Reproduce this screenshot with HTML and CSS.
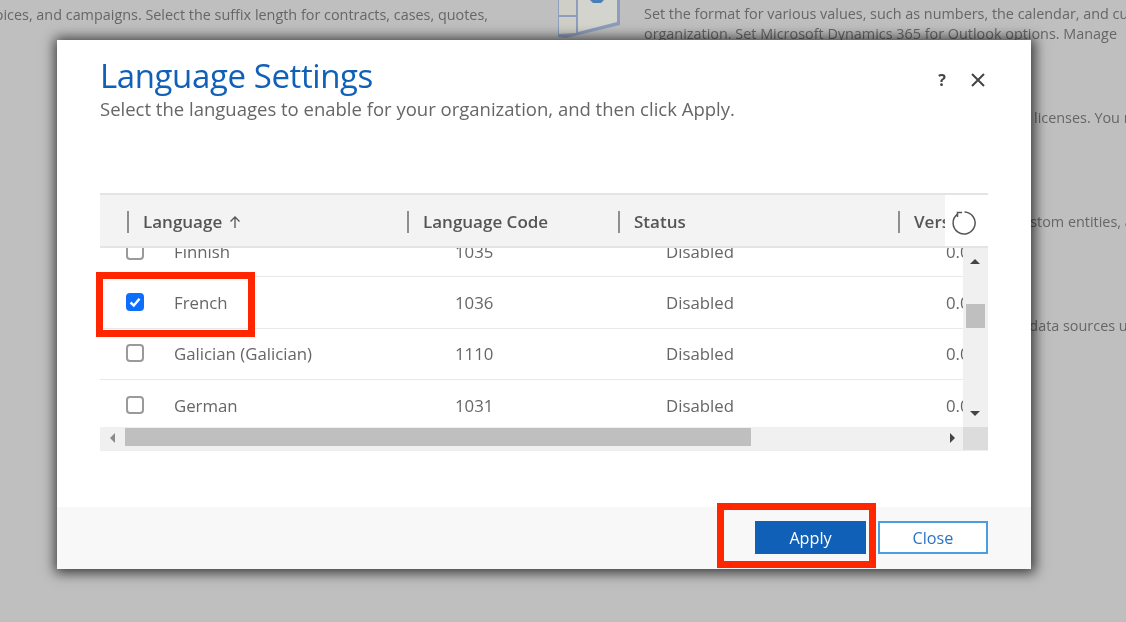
FILE: index.html
```html
<!DOCTYPE html>
<html>
<head>
    <title>Language Settings</title>
    <link rel="stylesheet" href="styles.css">
</head>
<body>

    <!-- settings page behind the dialog -->
    <div class="backdrop">
        <div class="back-left">
            <p>Set the prefix for knowledge articles, invoices, and campaigns. Select the suffix length for contracts, cases, quotes,</p>
        </div>
        <svg class="back-icon" width="64" height="38" viewBox="0 0 64 38">
            <path d="M0 0 H62 V25 L8 38 L0 37 Z" fill="#8d9dbb"/>
            <path d="M1 0 H18 V33 L1 34 Z" fill="#cfcfc8"/>
            <path d="M1 15 H18 V17 H1 Z" fill="#8d9dbb"/>
            <path d="M20 0 H59 V22 L20 32 Z" fill="#d4d4cf"/>
            <path d="M32 0 H46 L43 3 H35 Z" fill="#4a7fb5"/>
        </svg>
        <div class="back-right">
            <p>Set the format for various values, such as numbers, the calendar, and currency, used in your</p>
            <p>organization. Set Microsoft Dynamics 365 for Outlook options. Manage</p>
            <p class="line-licenses">Manage the product keys and the subscription licenses. You need</p>
            <p class="line-entities">Create and change the settings of your system and custom entities, and</p>
            <p class="line-sources">Configure the connections to the external data sources used</p>
        </div>
    </div>

    <!-- dialog -->
    <div class="dialog">
        <div class="dialog-main">
            <div class="dialog-head">
                <div>
                    <h1 class="dialog-title">Language Settings</h1>
                    <p class="dialog-sub">Select the languages to enable for your organization, and then click Apply.</p>
                </div>
                <div class="dialog-tools">
                    <span class="help">?</span>
                    <svg class="close-x" width="16" height="16" viewBox="0 0 16 16"><path d="M2 2 L14 14 M14 2 L2 14" stroke="#444" stroke-width="2" fill="none"/></svg>
                </div>
            </div>

            <div class="grid">
                <div class="grid-head">
                    <div class="col col-lang"><span class="head-cell">Language <svg width="14" height="14" viewBox="0 0 14 14"><path d="M7 13 V2 M2.5 6.5 L7 2 L11.5 6.5" stroke="#555" stroke-width="1.3" fill="none"/></svg></span></div>
                    <div class="col col-code"><span class="head-cell">Language Code</span></div>
                    <div class="col col-status"><span class="head-cell">Status</span></div>
                    <div class="col col-ver"><span class="head-cell">Version</span></div>
                    <div class="refresh">
                        <svg width="26" height="26" viewBox="0 0 26 26"><path d="M13.5 2 A11 11 0 1 1 6.5 4.2" stroke="#555" stroke-width="1.5" fill="none"/><path d="M11 2.5 H6.5 V7" stroke="#555" stroke-width="1.5" fill="none"/></svg>
                    </div>
                </div>
                <div class="grid-mid">
                    <div class="rows">
                        <div class="row row-first">
                            <span class="box"></span><span class="cell-lang">Finnish</span><span class="cell-code">1035</span><span class="cell-status">Disabled</span><span class="cell-ver">0.0.0.0</span>
                        </div>
                        <div class="row">
                            <span class="box box-on"><svg width="18" height="18" viewBox="0 0 18 18"><path d="M4.5 9.5 L7.8 12.5 L13.5 5.8" stroke="#fff" stroke-width="2.4" fill="none"/></svg></span><span class="cell-lang">French</span><span class="cell-code">1036</span><span class="cell-status">Disabled</span><span class="cell-ver">0.0.0.0</span>
                        </div>
                        <div class="row">
                            <span class="box"></span><span class="cell-lang">Galician (Galician)</span><span class="cell-code">1110</span><span class="cell-status">Disabled</span><span class="cell-ver">0.0.0.0</span>
                        </div>
                        <div class="row">
                            <span class="box"></span><span class="cell-lang">German</span><span class="cell-code">1031</span><span class="cell-status">Disabled</span><span class="cell-ver">0.0.0.0</span>
                        </div>
                    </div>
                    <div class="vbar">
                        <span class="arrow arrow-up"></span>
                        <span class="vthumb"></span>
                        <span class="arrow arrow-down"></span>
                    </div>
                </div>
                <div class="grid-foot">
                    <div class="hbar">
                        <span class="arrow arrow-left"></span>
                        <span class="hthumb"></span>
                        <span class="arrow arrow-right"></span>
                    </div>
                    <div class="corner"></div>
                </div>
            </div>
        </div>

        <div class="dialog-foot">
            <button class="btn btn-apply">Apply</button>
            <button class="btn btn-close">Close</button>
        </div>
    </div>

    <!-- red callouts drawn over the screenshot -->
    <div class="callout callout-french"></div>
    <div class="callout callout-apply"></div>

</body>
</html>
```

FILE: styles.css
```css
html, body {
    margin: 0;
    height: 100%;
    overflow: hidden;
    background-color: #bfbfbf;
}
body {
    position: relative;
    width: 1126px;
    height: 622px;
    font-family: "Open Sans", "Noto Sans", sans-serif;
    color: #555;
    filter: blur(0.45px); /* the reference is a soft, scaled-up capture */
}
p, h1 {
    margin: 0;
}

/* page behind */
.backdrop {
    display: flex;
    height: 100%;
    font-size: 14.4px;
    color: #666;
    white-space: nowrap;
}
.back-left {
    width: 488px;
    flex: none;
    display: flex;
    justify-content: flex-end;
    overflow: hidden;
    padding-top: 5px;
}
.back-icon {
    flex: none;
    margin-left: 70px;
}
.back-right {
    margin-left: 22px;
    overflow: hidden;
    flex: 1;
    padding-top: 4px;
}
.back-right p {
    line-height: 20px;
}
.line-licenses {
    margin-top: 64px;
    padding-left: 75px;
}
.line-entities {
    margin-top: 84px;
    padding-left: 27px;
}
.line-sources {
    margin-top: 84px;
    padding-left: 103px;
}

/* dialog */
.dialog {
    position: absolute;
    left: 57px;
    top: 40px;
    width: 974px;
    height: 529px;
    background-color: #fff;
    box-shadow: 1px 1px 12px 3px rgba(0, 0, 0, 0.7);
    display: flex;
    flex-direction: column;
}
.dialog-main {
    flex: 1;
    padding: 16px 43px 0;
}
.dialog-head {
    display: flex;
    justify-content: space-between;
    height: 137px;
}
.dialog-title {
    font-size: 33px;
    font-weight: 400;
    line-height: 40px;
    color: #1160b7;
    letter-spacing: -0.4px;
}
.dialog-sub {
    font-size: 18.5px;
    line-height: 26px;
    color: #666;
}
.dialog-tools {
    display: flex;
    align-items: center;
    gap: 24px;
    height: 48px;
    margin-right: 2px;
}
.help {
    font-size: 16px;
    font-weight: 700;
    color: #444;
}

/* grid */
.grid {
    width: 888px;
    border-bottom: 1px solid #eee;
}
.grid-head {
    position: relative;
    display: flex;
    height: 55px;
    padding-top: 2px;
    background-color: #f3f3f3;
    border-top: 2px solid #e4e4e4;
    border-bottom: 2px solid #e4e4e4;
    box-sizing: border-box;
    font-size: 17px;
    font-weight: 600;
    color: #555;
    overflow: hidden;
}
.col {
    display: flex;
    align-items: center;
    flex: none;
    white-space: nowrap;
}
.col-lang { width: 307px; padding-left: 27px; box-sizing: border-box; }
.col-code { width: 211px; }
.col-status { width: 280px; }
.col-ver { width: 90px; }
.head-cell {
    border-left: 2px solid #8e8e8e;
    padding-left: 14px;
    line-height: 22px;
    display: flex;
    align-items: center;
    gap: 6px;
}
.refresh {
    position: absolute;
    right: 0;
    top: 0;
    width: 43px;
    height: 51px;
    box-sizing: border-box;
    padding: 5px 11px 0 0;
    background-color: #fff;
    display: flex;
    align-items: center;
    justify-content: flex-end;
}
.grid-mid {
    display: flex;
    height: 179px;
}
.rows {
    flex: 1;
    overflow: hidden;
    font-size: 16.8px;
    color: #666;
}
.row {
    display: flex;
    align-items: center;
    box-sizing: border-box;
    height: 51.3px;
    border-bottom: 1px solid #e8e8e8;
    white-space: nowrap;
}
.row-first {
    margin-top: -22px;
}
.box {
    flex: none;
    width: 18px;
    height: 18px;
    margin: 0 30px 1px 26px;
    box-sizing: border-box;
    border: 2px solid #9a9a9a;
    border-radius: 4px;
    background-color: #fff;
}
.box-on {
    border: none;
    background-color: #0d6efd;
    display: flex;
}
.cell-lang { width: 281px; flex: none; }
.cell-code { width: 211px; flex: none; }
.cell-status { width: 280px; flex: none; }
.cell-ver { width: 17px; flex: none; overflow: hidden; }

/* scrollbars */
.vbar {
    position: relative;
    flex: none;
    width: 25px;
    background-color: #f0f0f0;
}
.vthumb {
    position: absolute;
    left: 3px;
    top: 56px;
    width: 19px;
    height: 24px;
    background-color: #bfbfbf;
}
.arrow {
    position: absolute;
    width: 0;
    height: 0;
    border: 5px solid transparent;
}
.arrow-up {
    left: 7px;
    top: 6px;
    border-bottom-color: #444;
}
.arrow-down {
    left: 7px;
    top: 163px;
    border-top-color: #444;
}
.arrow-left {
    left: 5px;
    top: 6px;
    border-right-color: #8a8a8a;
}
.arrow-right {
    right: 3px;
    top: 6px;
    border-left-color: #444;
}
.grid-foot {
    display: flex;
    height: 23px;
}
.hbar {
    position: relative;
    flex: 1;
    background-color: #f0f0f0;
}
.hthumb {
    position: absolute;
    left: 25px;
    top: 1px;
    width: 626px;
    height: 18px;
    background-color: #bfbfbf;
}
.corner {
    flex: none;
    width: 25px;
    background-color: #dcdcdc;
}

/* footer */
.dialog-foot {
    flex: none;
    height: 62px;
    box-sizing: border-box;
    padding: 0 43px 2px 0;
    background-color: #f8f8f8;
    display: flex;
    align-items: center;
    justify-content: flex-end;
    gap: 12px;
}
.btn {
    height: 33px;
    box-sizing: border-box;
    font-family: inherit;
    font-size: 16.2px;
    border: 2px solid #1160b7;
    padding: 1px 0 0;
}
.btn-apply {
    width: 111px;
    background-color: #1160b7;
    color: #fff;
}
.btn-close {
    width: 110px;
    background-color: #fff;
    border-color: #4a9de0;
    color: #2a74c4;
}

/* red boxes */
.callout {
    position: absolute;
    box-sizing: border-box;
    border: 7px solid #ff2600;
}
.callout-french {
    left: 96px;
    top: 272px;
    width: 159px;
    height: 65px;
}
.callout-apply {
    left: 717px;
    top: 503px;
    width: 159px;
    height: 65px;
}
```
